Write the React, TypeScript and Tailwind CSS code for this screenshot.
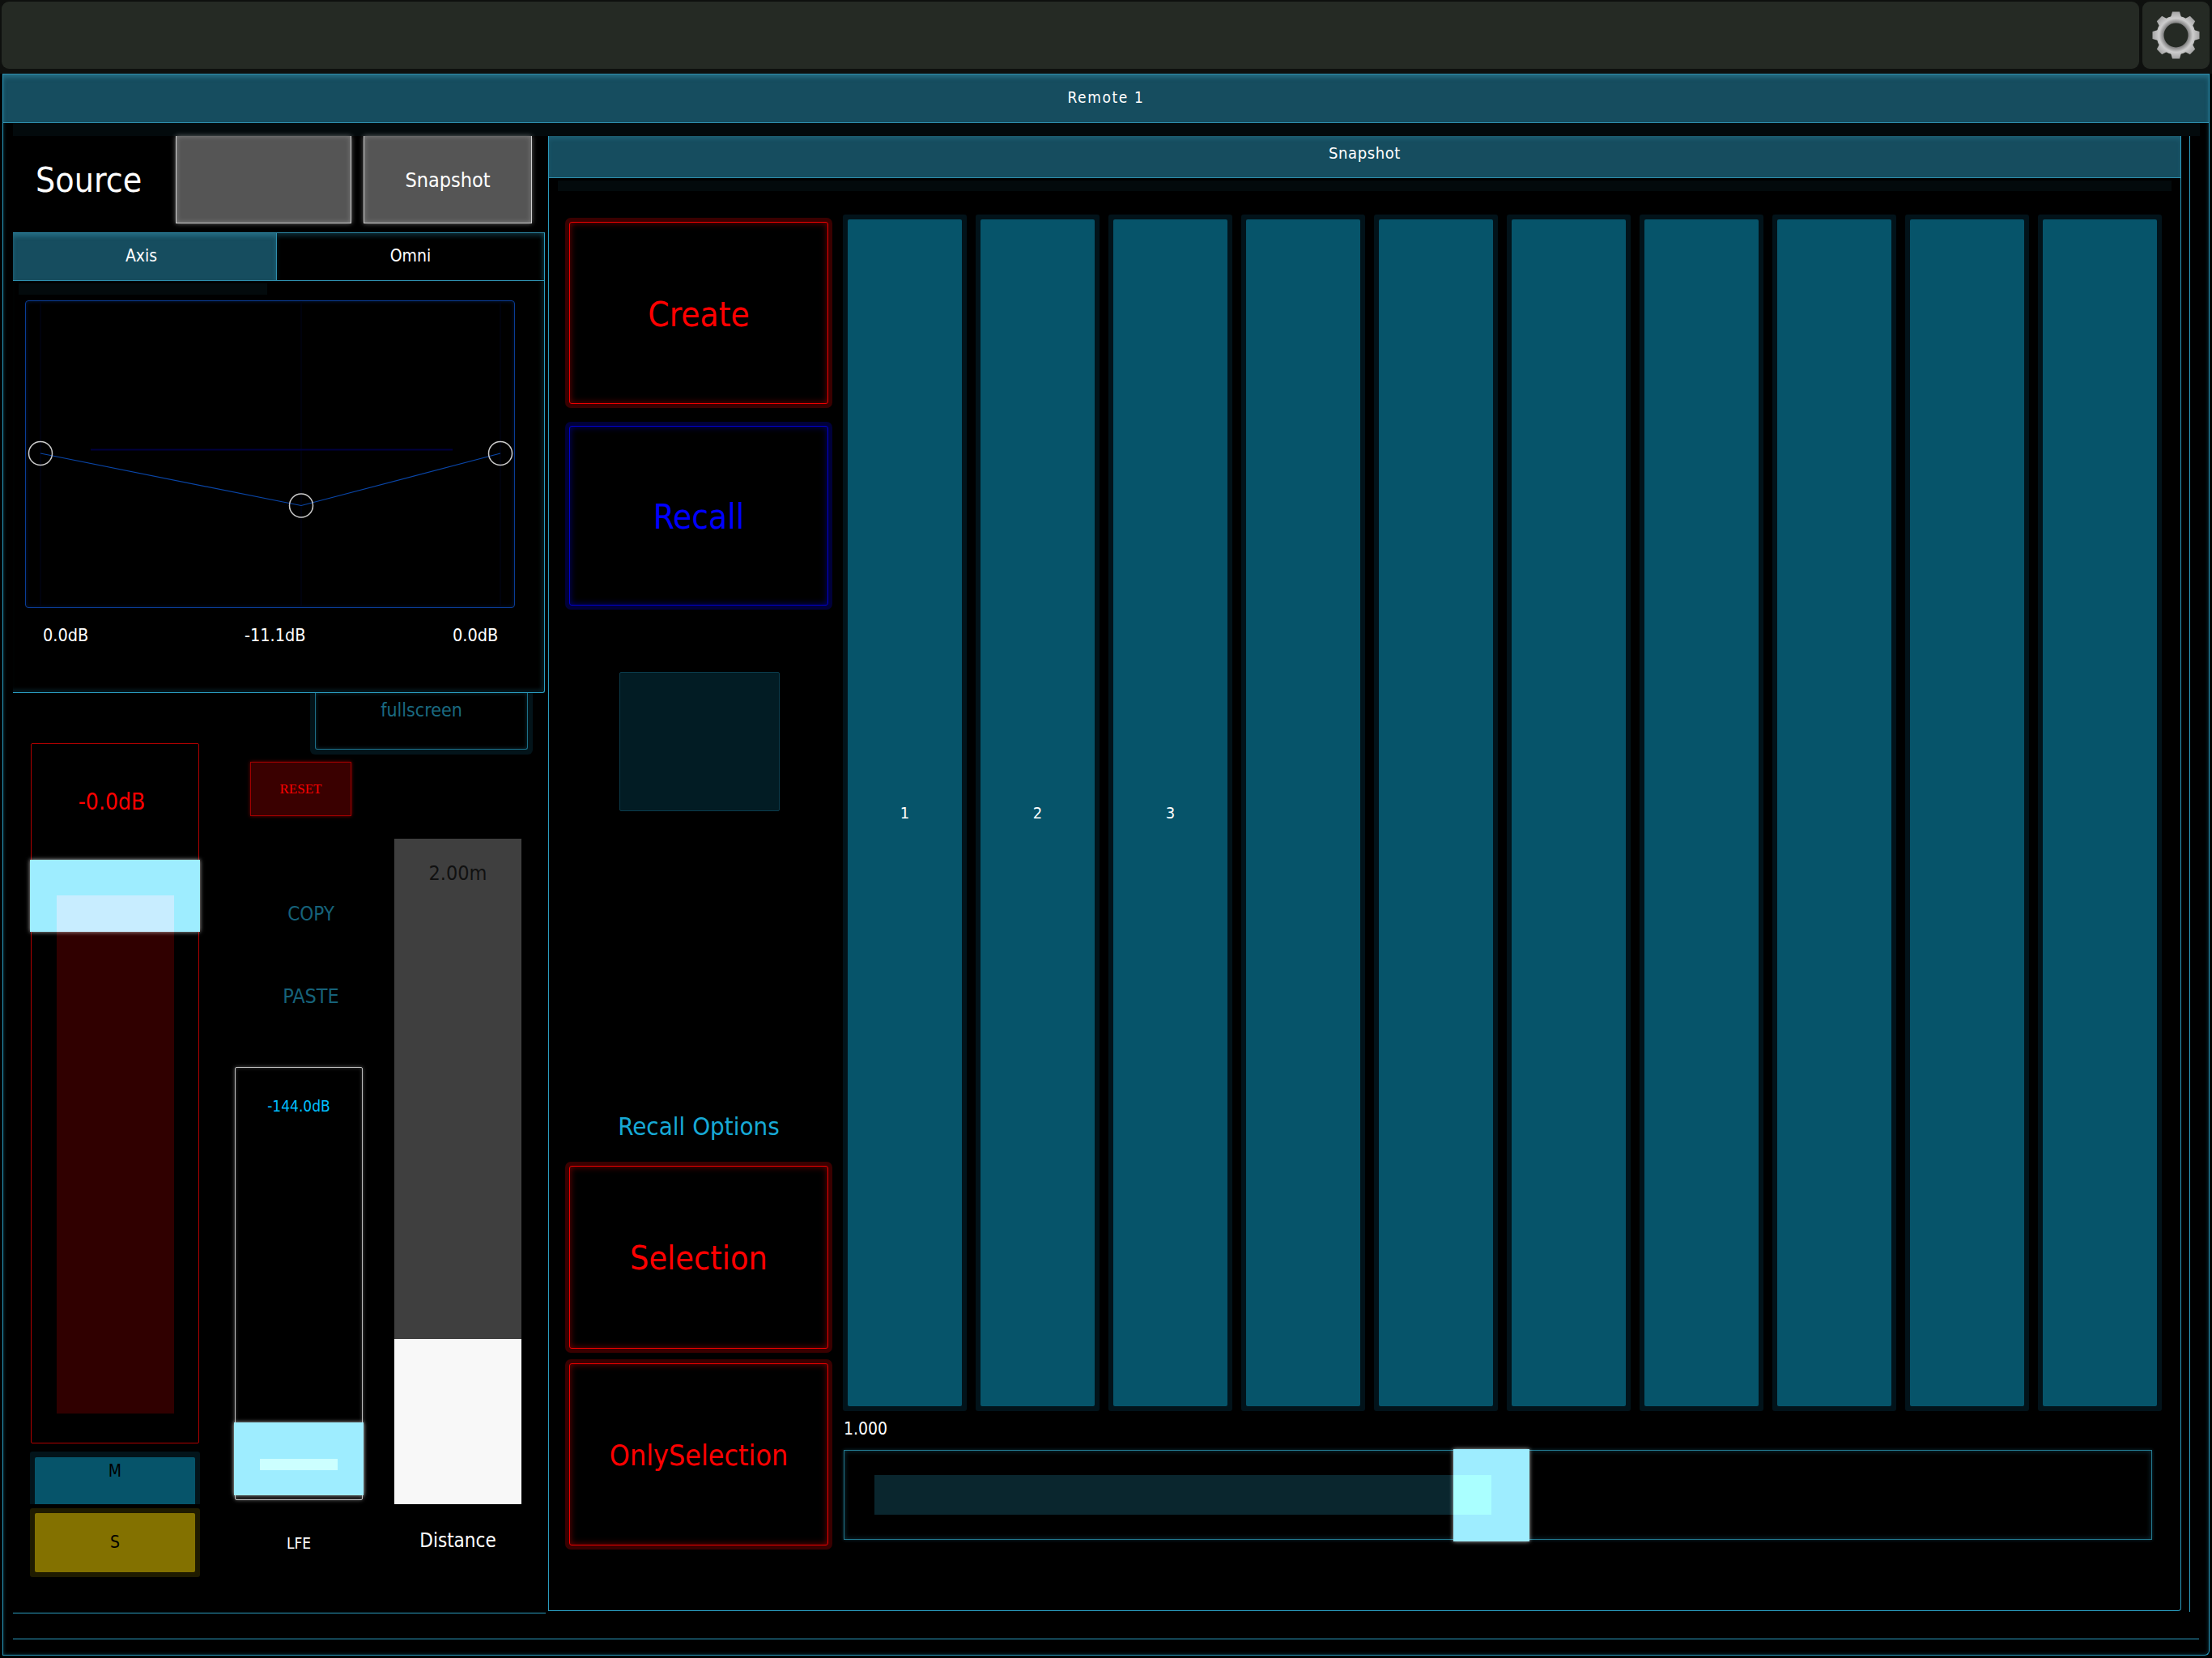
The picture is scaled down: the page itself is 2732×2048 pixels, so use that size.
import React from "react";

const F = "font-['DejaVu_Sans_Condensed','DejaVu_Sans',sans-serif] [font-stretch:condensed]";

function Gear() {
  const teeth = [0, 45, 90, 135, 180, 225, 270, 315];
  return (
    <svg width="83" height="83" viewBox="0 0 83 83">
      <defs>
        <radialGradient id="gearFill" gradientUnits="userSpaceOnUse" cx="41.5" cy="41.5" r="29">
          <stop offset="0.5" stopColor="#757575" />
          <stop offset="0.72" stopColor="#cdcdcd" />
          <stop offset="1" stopColor="#a4a4a4" />
        </radialGradient>
      </defs>
      {teeth.map((a) => (
        <path key={a} d="M37 12.5 L46 12.5 L48.5 21 L34.5 21 Z" fill="url(#gearFill)" transform={`rotate(${a} 41.5 41.5)`} />
      ))}
      <circle cx="41.5" cy="41.5" r="19.5" fill="none" stroke="url(#gearFill)" strokeWidth="9" />
    </svg>
  );
}

function ActionButton({ label, tone, h, size }: { label: string; tone: "red" | "blue"; h: string; size: string }) {
  const outer = tone === "red" ? "bg-[#3a0000]" : "bg-[#00003a]";
  const inner =
    tone === "red"
      ? "border-[#f00000] text-[#ff0000] shadow-[inset_0_0_8px_rgba(255,0,0,0.45)]"
      : "border-[#0000d0] text-[#0000ff] shadow-[inset_0_0_8px_rgba(0,0,255,0.45)]";
  return (
    <div className={`${h} w-[330px] rounded-[7px] p-[5px] ${outer}`}>
      <div className={`flex h-full w-full items-center justify-center rounded-[3px] border bg-black pt-[3px] ${size} ${inner}`}>{label}</div>
    </div>
  );
}

function SnapCard({ label }: { label?: string }) {
  return (
    <div className="h-full w-[153px] rounded-[3px] bg-[#02131a] p-[6px]">
      <div className="flex h-full w-full items-center justify-center rounded-[2px] bg-[#06546a] text-[20px] text-white">{label}</div>
    </div>
  );
}

export default function App() {
  const cards = ["1", "2", "3", "", "", "", "", "", "", ""];
  return (
    <div className={`h-[2048px] w-[2732px] overflow-hidden bg-black ${F}`}>
      <div className="flex h-[91px] gap-[4px] bg-[#0e100e] pl-[2px] pt-[2px]">
        <div className="h-[83px] w-[2640px] rounded-[9px] bg-[#252a24]" />
        <div className="h-[83px] w-[83px] rounded-[9px] bg-[#252a24]">
          <Gear />
        </div>
      </div>

      <div className="ml-[3px] h-[1954px] w-[2726px] rounded-br-[6px] border-x border-b border-[#2a9cc0] shadow-[inset_0_0_5px_rgba(39,147,181,0.35)]">
        <div className="flex h-[61px] items-center justify-center border-y border-[#2f8fae] bg-[#164d5f] pb-[2px] text-[19px] tracking-[1.6px] text-white shadow-[inset_0_4px_5px_rgba(60,160,190,0.35)]">Remote 1</div>
        <div className="ml-[12px] mr-[11px] h-[16px] bg-[#030a0c]" />

        <div className="flex h-[1823px] w-[2701px] border-r border-[#2a9cc0]">
          <div className="w-[673px]">
            <div className="flex h-[108px]">
              <div className="flex h-full w-[213px] items-center pl-[40px] pt-[2px] text-[42.5px] text-white">Source</div>
              <div className="h-full w-[217px] border border-t-0 border-[#d0d0d0] bg-[#555555] shadow-[0_0_6px_rgba(255,255,255,0.4),inset_0_0_6px_rgba(255,255,255,0.25)]" />
              <div className="ml-[15px] flex h-full w-[208px] items-center justify-center border border-t-0 border-[#d0d0d0] bg-[#555555] pt-[2px] text-[25px] text-white shadow-[0_0_6px_rgba(255,255,255,0.4),inset_0_0_6px_rgba(255,255,255,0.25)]">Snapshot</div>
            </div>

            <div className="ml-[12px] mt-[11px] h-[569px] w-[657px] rounded-br-[3px] border-b border-r border-[#2a9cc0] shadow-[inset_-3px_-3px_5px_rgba(39,147,181,0.2)]">
              <div className="flex h-[60px] border-b border-[#2f8fae]">
                <div className="flex h-full w-[326px] items-center justify-center border-r border-t border-[#2f8fae] bg-[#164d5f] pr-[8px] text-[21px] text-white shadow-[inset_0_4px_5px_rgba(60,160,190,0.35)]">Axis</div>
                <div className="flex h-full flex-1 items-center justify-center border-t border-[#2f8fae] text-[21px] text-white shadow-[inset_0_4px_5px_rgba(39,147,181,0.25)]">Omni</div>
              </div>
              <div className="ml-[7px] mt-[3px] h-[14px] w-[307px] bg-[#030a0c]" />
              <div className="ml-[15px] mt-[7px] h-[380px] w-[605px] rounded-[4px] border border-[#0a3c96] shadow-[inset_0_0_5px_rgba(10,60,150,0.4)]">
                <svg width="603" height="378" viewBox="0 0 603 378">
                  <path d="M18 0V378M340 0V378M586 0V378" stroke="#00041a" strokeWidth="1" fill="none" />
                  <path d="M80 183.5H527" stroke="#00003f" strokeWidth="2" fill="none" />
                  <path d="M18 188L340 252.5L586 188" stroke="#0a46a8" strokeWidth="1.2" fill="none" />
                  <circle cx="18" cy="188" r="14.5" fill="none" stroke="#cccccc" strokeWidth="1.5" />
                  <circle cx="340" cy="252.5" r="14.5" fill="none" stroke="#cccccc" strokeWidth="1.5" />
                  <circle cx="586" cy="188" r="14.5" fill="none" stroke="#cccccc" strokeWidth="1.5" />
                </svg>
              </div>
              <div className="mt-[21px] flex h-[26px] items-center pl-[37px] text-[21.5px] text-white">
                <span className="w-[249px]">0.0dB</span>
                <span className="w-[257px]">-11.1dB</span>
                <span>0.0dB</span>
              </div>
            </div>

            <div className="ml-[379px] h-[76px] w-[275px] rounded-b-[6px] bg-[#03141a] px-[6px] pb-[6px]">
              <div className="flex h-full w-full justify-center rounded-b-[3px] border-x border-b border-[#1d6f88] bg-black pt-[4px] text-[23px] text-[#1a6a80] shadow-[inset_0_0_5px_rgba(39,147,181,0.35)]">fullscreen</div>
            </div>

            <div className="flex h-[1060px]">
              <div className="z-10 ml-[33px] -mt-[14px] w-[210px]">
                <div className="relative mx-[1px] h-[865px] w-[208px] rounded-[2px] border border-[#b00000]">
                  <div className="flex h-[144px] items-center justify-center pr-[8px] text-[28px] text-[#ff0000]">-0.0dB</div>
                  <div className="absolute left-[31px] top-[187px] h-[640px] w-[145px] bg-[#300000]" />
                  <div className="absolute -left-[2px] top-[143px] h-[89px] w-[210px] bg-[#9eedff] shadow-[0_0_5px_rgba(255,255,255,0.7)]" />
                  <div className="absolute left-[31px] top-[187px] h-[45px] w-[145px] bg-[#c8edff]" />
                </div>
                <div className="mt-[10px] h-[65px] rounded-t-[3px] bg-[#03141a] px-[6px] pt-[7px]">
                  <div className="flex h-[58px] justify-center rounded-t-[2px] bg-[#06546a] text-[21px] leading-[35px] text-black">M</div>
                </div>
                <div className="mt-[5px] h-[85px] rounded-[3px] bg-[#1f1b00] p-[6px]">
                  <div className="flex h-full items-center justify-center rounded-[2px] bg-[#837100] text-[21px] text-black">S</div>
                </div>
              </div>

              <div className="ml-[42px] w-[160px]">
                <div className="ml-[20px] mt-[9px] flex h-[67px] w-[125px] items-center justify-center border border-[#a00000] bg-[#3a0000] font-['Liberation_Serif',serif] text-[17px] text-[#ff0000] shadow-[0_0_4px_rgba(255,0,0,0.5)]">RESET</div>
                <div className="mt-[106px] ml-[30px] flex h-[30px] w-[130px] items-center justify-center text-[24px] text-[#16627a]">COPY</div>
                <div className="mt-[72px] ml-[30px] flex h-[30px] w-[130px] items-center justify-center text-[25px] text-[#16627a]">PASTE</div>
                <div className="relative ml-[1px] mt-[72px] h-[535px] w-[158px] rounded-[2px] border border-[#bdbdbd] shadow-[0_0_5px_rgba(255,255,255,0.35),inset_0_0_4px_rgba(255,255,255,0.25)]">
                  <div className="flex h-[95px] items-center justify-center text-[19px] text-[#00bfff]">-144.0dB</div>
                  <div className="absolute -left-[2px] top-[438px] h-[90px] w-[160px] bg-[#9eedff] shadow-[0_0_5px_rgba(255,255,255,0.7)]" />
                  <div className="absolute left-[30px] top-[483px] h-[14px] w-[96px] bg-[#ccffff]" />
                </div>
                <div className="mt-[40px] flex h-[26px] items-center justify-center text-[19px] text-white">LFE</div>
              </div>

              <div className="ml-[38px] mt-[104px] w-[157px]">
                <div className="flex h-[618px] justify-center bg-[#3f3f3f] pt-[29px] text-[25px] leading-[28px] text-[#111111]">2.00m</div>
                <div className="h-[204px] bg-[#f8f8f8]" />
                <div className="mt-[32px] flex h-[26px] items-center justify-center text-[24px] text-white">Distance</div>
              </div>
            </div>
            <div className="ml-[12px] h-px w-[658px] bg-[#2a9cc0]" />
          </div>

          <div className="mb-[1px] w-[2017px] rounded-br-[4px] border-x border-b border-[#2a9cc0]">
            <div className="flex h-[52px] items-center justify-center border-b border-[#2f8fae] bg-[#164d5f] pb-[10px] text-[20px] tracking-[0.6px] text-white shadow-[inset_0_4px_5px_rgba(60,160,190,0.2)]">Snapshot</div>
            <div className="ml-[11px] mr-[11px] mt-[3px] h-[13px] bg-[#030a0c]" />
            <div className="flex pl-[20px]">
              <div className="mt-[33px] w-[330px]">
                <ActionButton label="Create" tone="red" h="h-[235px]" size="text-[42px]" />
                <ActionButton label="Recall" tone="blue" h="mt-[17px] h-[232px]" size="text-[42px]" />
                <div className="ml-[67px] mt-[77px] h-[172px] w-[198px] rounded-[2px] border border-[#0b3c4c] bg-[#021c24]" />
                <div className="mt-[374px] flex h-[30px] items-center justify-center text-[31px] text-[#17a9d6]">Recall Options</div>
                <ActionButton label="Selection" tone="red" h="mt-[29px] h-[236px]" size="text-[41px]" />
                <ActionButton label="OnlySelection" tone="red" h="mt-[8px] h-[235px]" size="text-[35.5px]" />
              </div>
              <div className="ml-[13px] mt-[29px] w-[1630px]">
                <div className="flex h-[1478px] gap-[11px]">
                  {cards.map((c, i) => (
                    <SnapCard key={i} label={c} />
                  ))}
                </div>
                <div className="mt-[10px] flex h-[26px] items-center pl-[1px] text-[21px] text-white">1.000</div>
                <div className="relative ml-[1px] mt-[12px] h-[111px] w-[1616px] border border-[#23798f] shadow-[inset_0_0_6px_rgba(39,147,181,0.35),0_0_4px_rgba(39,147,181,0.35)]">
                  <div className="ml-[37px] mt-[30px] h-[49px] w-[762px] bg-[#0a262e]" />
                  <div className="absolute -top-[2px] left-[752px] h-[114px] w-[94px] bg-[#9eedff] shadow-[0_0_5px_rgba(255,255,255,0.7)]" />
                  <div className="absolute left-[752px] top-[30px] h-[49px] w-[47px] bg-[#aaffff]" />
                </div>
              </div>
            </div>
          </div>
        </div>
        <div className="ml-[12px] mt-[33px] h-px w-[2700px] bg-[#2a9cc0]" />
      </div>
    </div>
  );
}
